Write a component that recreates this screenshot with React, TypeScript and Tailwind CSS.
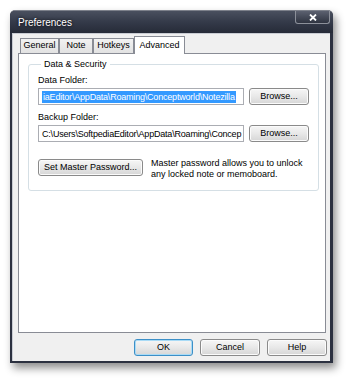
import React from "react";

const font = { fontFamily: '"Liberation Sans", Arial, sans-serif' };

function Btn({ children, w, focused }: { children: React.ReactNode; w: string; focused?: boolean }) {
  return (
    <div
      className={`${w} h-[17px] flex items-center justify-center rounded-[3px] border text-[9px] text-black bg-gradient-to-b from-[#f6f6f6] via-[#e8e8e8] to-[#d6d6d6] ${
        focused ? "border-[#3c8fc7] shadow-[inset_0_0_0_1px_#a9dbf6]" : "border-[#8a8a8a] shadow-[inset_0_0_0_1px_#fbfbfb]"
      }`}
    >
      {children}
    </div>
  );
}

function Tab({ label, w, selected }: { label: string; w: string; selected?: boolean }) {
  if (selected) {
    return (
      <div className={`${w} h-[18px] relative z-10 bg-white border border-b-0 border-[#898c95] flex items-start justify-center pt-[2px] text-[9px] text-black`}>
        {label}
      </div>
    );
  }
  return (
    <div className={`${w} h-[15px] mb-[1px] bg-gradient-to-b from-[#f2f2f2] to-[#e2e2e2] border border-b-0 border-[#898c95] flex items-center justify-center text-[9px] text-black`}>
      {label}
    </div>
  );
}

export default function App() {
  return (
    <div className="w-[350px] h-[380px] bg-white overflow-hidden" style={font}>
      <div className="ml-[10px] mt-[10px] w-[323px] h-[353px] flex flex-col rounded-t-[5px] bg-[#2c3140] shadow-[3px_5px_8px_rgba(0,0,0,0.45)] border-t border-[#7d818b]">
        {/* title bar */}
        <div className="h-[22px] flex items-start bg-gradient-to-b from-[#4a505f] via-[#343a49] to-[#262b38] rounded-t-[5px]">
          <div className="self-center ml-[8px] text-[10px] text-white [text-shadow:0_0_3px_#000]">Preferences</div>
          <div className="ml-auto mr-[3px] w-[35px] h-[13px] rounded-b-[3px] border border-t-0 border-[#8c909a] bg-gradient-to-b from-[#5c6170] to-[#2f3441] flex items-center justify-center">
            <svg width="8" height="7" viewBox="0 0 8 7">
              <path d="M1 0.5 L7 6.5 M7 0.5 L1 6.5" stroke="white" strokeWidth="1.8" />
            </svg>
          </div>
        </div>
        {/* body */}
        <div className="flex-1 flex flex-col pl-[2px] pr-[3px] pb-[2px]">
          <div className="flex-1 flex flex-col bg-[#f0f0f0] pl-[5px] pr-[4px] pt-[2px] border-l border-t border-[#c9ccd3]">
            <div className="flex items-end h-[18px] pl-[2px]">
              <Tab label="General" w="w-[39px]" />
              <Tab label="Note" w="w-[34px]" />
              <Tab label="Hotkeys" w="w-[41px]" />
              <Tab label="Advanced" w="w-[51px]" selected />
            </div>
            <div className="h-[280px] -mt-px bg-white border border-[#898c95] pl-[9px] pr-[8px] pt-[5px]">
              <fieldset className="border border-[#d5dfe5] rounded-[3px] pl-[9px] pr-[9px] pb-[10px]">
                <legend className="ml-[3px] px-[3px] text-[9px] leading-[11px] text-black">Data &amp; Security</legend>
                <div className="mt-[5px] text-[9px] leading-[11px] text-black">Data Folder:</div>
                <div className="mt-[2px] flex items-center gap-[5px]">
                  <div className="w-[206px] h-[17px] border border-[#abadb3] bg-white flex items-center px-[3px] overflow-hidden whitespace-nowrap">
                    <span className="bg-[#3399ff] text-white text-[9px] leading-[12px] px-[1px] tracking-[-0.2px]">iaEditor\AppData\Roaming\Conceptworld\Notezilla</span>
                  </div>
                  <Btn w="w-[60px]">Browse...</Btn>
                </div>
                <div className="mt-[7px] text-[9px] leading-[11px] text-black">Backup Folder:</div>
                <div className="mt-[2px] flex items-center gap-[5px]">
                  <div className="w-[206px] h-[17px] border border-[#abadb3] bg-white flex items-center px-[3px] overflow-hidden whitespace-nowrap">
                    <span className="text-black text-[9px] leading-[12px] tracking-[-0.2px]">C:\Users\SoftpediaEditor\AppData\Roaming\Concep</span>
                  </div>
                  <Btn w="w-[60px]">Browse...</Btn>
                </div>
                <div className="mt-[16px] flex items-start gap-[8px]">
                  <div className="mt-[1px]">
                    <Btn w="w-[105px]">Set Master Password...</Btn>
                  </div>
                  <div className="text-[9px] leading-[11px] text-black">
                    Master password allows you to unlock
                    <br />
                    any locked note or memoboard.
                  </div>
                </div>
              </fieldset>
            </div>
            <div className="mt-[6px] flex justify-end gap-[7px] mr-[-1px]">
              <Btn w="w-[59px]" focused>OK</Btn>
              <Btn w="w-[60px]">Cancel</Btn>
              <Btn w="w-[60px]">Help</Btn>
            </div>
          </div>
        </div>
      </div>
    </div>
  );
}
